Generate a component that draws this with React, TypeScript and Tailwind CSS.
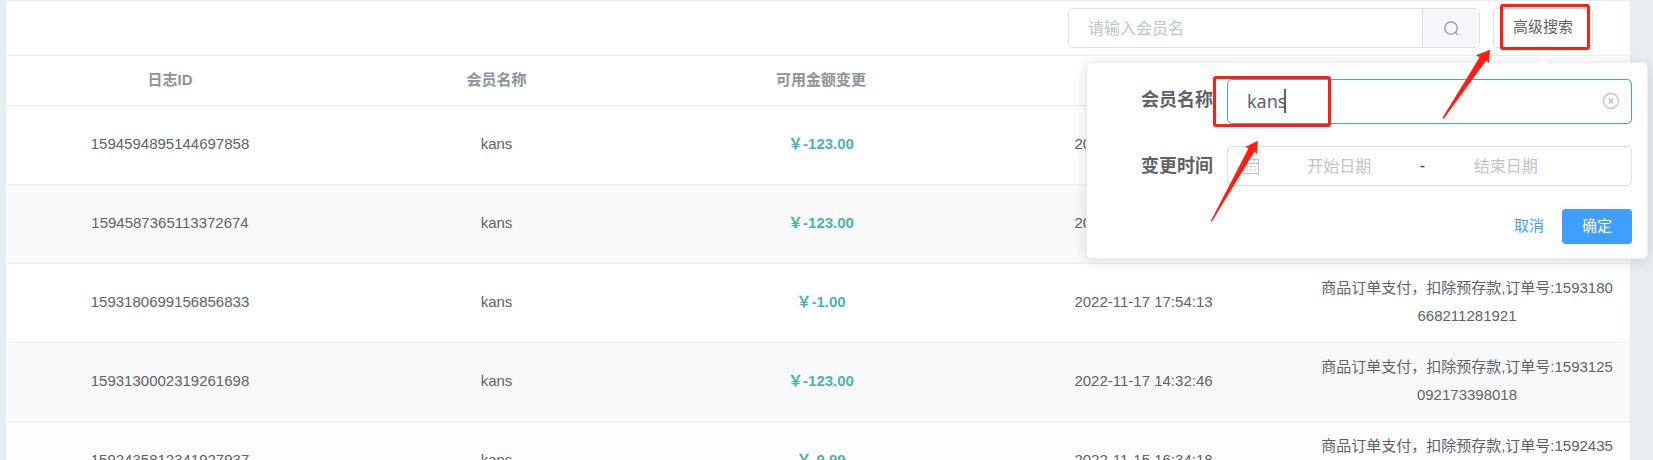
import { useState } from 'react';

interface ILog {
    id: string;
    name: string;
    amount: string;
    time: string;
    detail: string;
}

const logs: ILog[] = [
    { id: '1594594895144697858', name: 'kans', amount: '-123.00', time: '2022-11-21 15:32:10', detail: '商品订单支付，扣除预存款,订单号:1594594869853040641' },
    { id: '1594587365113372674', name: 'kans', amount: '-123.00', time: '2022-11-21 15:02:15', detail: '商品订单支付，扣除预存款,订单号:1594587340576694273' },
    { id: '1593180699156856833', name: 'kans', amount: '-1.00', time: '2022-11-17 17:54:13', detail: '商品订单支付，扣除预存款,订单号:1593180668211281921' },
    { id: '1593130002319261698', name: 'kans', amount: '-123.00', time: '2022-11-17 14:32:46', detail: '商品订单支付，扣除预存款,订单号:1593125092173398018' },
    { id: '1592435812341927937', name: 'kans', amount: '-9.99', time: '2022-11-15 16:34:18', detail: '商品订单支付，扣除预存款,订单号:1592435783409618945' },
]

const rowColors = ['bg-white', 'bg-[#fafafa]', 'bg-white', 'bg-[#fafafa]', 'bg-[#fdfdfd]']

function SearchIcon() {
    return (
        <svg viewBox="0 0 15 15" className="size-[15px]" fill="none" stroke="currentColor" strokeWidth="1.2">
            <circle cx="7" cy="7" r="6.2" />
            <path d="M11.2 11.2 L13.8 13.8" />
        </svg>
    )
}

function ClearIcon() {
    return (
        <svg viewBox="0 0 18 18" className="size-[18px]" fill="none" stroke="currentColor" strokeWidth="1.3">
            <circle cx="9" cy="9" r="7.5" />
            <path d="M6.7 6.7 L11.3 11.3 M11.3 6.7 L6.7 11.3" strokeWidth="1.7" />
        </svg>
    )
}

function CalendarIcon() {
    return (
        <svg viewBox="0 0 18 18" className="size-[18px] shrink-0" fill="none" stroke="currentColor" strokeWidth="1.2">
            <path d="M1.5 2.5 H16.5 V16.5 H1.5 Z M1.5 6.5 H16.5 M5.5 0.8 V4.5 M12.5 0.8 V4.5" />
            <path d="M4 9.5 H6 M8 9.5 H10 M12 9.5 H14 M4 13 H6 M8 13 H10 M12 13 H14" />
        </svg>
    )
}

function AdvancedSearch() {
    const [name, setName] = useState('kans')
    return (
        <form className="absolute top-[54px] -right-[55px] z-10 w-[562px] rounded-[5px] border border-[#ebeef5] bg-white pt-4 pr-[15px] pb-[14px] shadow-[0_2px_15px_rgba(0,0,0,0.12)]">
            <svg viewBox="0 0 14 7" className="absolute -top-[6px] right-[98px] w-[14px] h-[7px]">
                <path d="M0 7 L7 0 L14 7 Z" fill="#fff" />
            </svg>
            <div className="flex">
                <label htmlFor="member-name" className="w-[140px] shrink-0 pr-[14px] pt-[7px] text-right text-[18px] leading-7 font-bold">会员名称</label>
                <div className="relative flex-1">
                    <input
                        id="member-name"
                        value={name}
                        onChange={e => setName(e.target.value)}
                        className="block w-full h-[45px] rounded-[5px] border border-[#409eff] bg-white px-[19px] pb-[2px] text-[18px] font-['Noto_Sans','Noto_Sans_CJK_SC',sans-serif] outline-none"
                    />
                    <span className="absolute left-[57px] top-[10px] w-[2px] h-6 bg-[#606266]"></span>
                    <button type="button" aria-label="清空" onClick={() => setName('')} className="absolute right-3 top-[13px] text-[#c0c4cc]">
                        <ClearIcon />
                    </button>
                    <span className="absolute -left-[14px] -top-[3px] w-[118px] h-[51px] rounded-[3px] border-3 border-[#ff1e10]"></span>
                    <svg viewBox="0 0 50 84" className="absolute -left-[17px] top-[61px] z-10 w-[50px] h-[84px]">
                        <path d="M47.8 0.8 L47 14.2 L44.6 11.6 L1.8 81.8 L0.8 81 L38.4 8.6 L35.3 7 Z" fill="#ff1e10" />
                    </svg>
                </div>
            </div>
            <div className="mt-[22px] flex">
                <label htmlFor="start-date" className="w-[140px] shrink-0 pr-[14px] pt-[6px] text-right text-[18px] leading-7 font-bold">变更时间</label>
                <div className="flex h-10 min-w-0 flex-1 items-center rounded-[5px] border border-[#dcdfe6] pl-[14px] pr-[46px] text-base">
                    <span className="text-[#c0c4cc]"><CalendarIcon /></span>
                    <input id="start-date" placeholder="开始日期" className="min-w-0 flex-1 pt-[2px] text-center placeholder:text-[#c0c4cc] outline-none" />
                    <span className="w-2 text-center text-[#303133]">-</span>
                    <input aria-label="结束日期" placeholder="结束日期" className="min-w-0 flex-1 pt-[2px] text-center placeholder:text-[#c0c4cc] outline-none" />
                </div>
            </div>
            <div className="mt-[23px] flex items-center justify-end gap-[18px] text-[15px]">
                <button type="button" className="text-[#409eff]">取消</button>
                <button type="submit" className="h-[35px] w-[70px] rounded-[4px] bg-[#409eff] text-white">确定</button>
            </div>
        </form>
    )
}

function App() {
    return (
        <div className="h-screen overflow-hidden bg-[#e8edf1] pt-px pl-[6px] pr-[23px] text-[15px] text-[#606266] font-['Liberation_Sans','Noto_Sans_CJK_SC',sans-serif]">
            <div className="bg-white">
                <div className="flex justify-end gap-[13px] pt-[7px] pb-[7px] pr-[37px]">
                    <div className="flex h-10 w-[412px] overflow-hidden rounded-[5px] border border-[#dcdfe6]">
                        <input aria-label="会员名" placeholder="请输入会员名" className="min-w-0 flex-1 px-[19px] pt-[2px] text-base placeholder:text-[#c0c4cc] outline-none" />
                        <button aria-label="搜索" className="flex w-[57px] items-center justify-center border-l border-[#dcdfe6] bg-[#f5f7fa] text-[#909399]">
                            <SearchIcon />
                        </button>
                    </div>
                    <div className="relative">
                        <button className="h-10 w-[100px] rounded-[5px] border border-[#dcdfe6] bg-white pb-[2px]">高级搜索</button>
                        <AdvancedSearch />
                        <span className="absolute left-[7px] -top-1 w-[90px] h-[46px] rounded-[3px] border-3 border-[#ff1e10]"></span>
                        <svg viewBox="0 0 50 72" className="absolute -left-[52px] top-[41px] z-20 w-[50px] h-[72px]">
                            <path d="M49 0.8 L47.9 14 L45.2 11.6 L2.6 70 L1.4 69 L38.6 8.3 L35 6.2 Z" fill="#ff1e10" />
                        </svg>
                    </div>
                </div>
                <table className="w-full table-fixed border-collapse text-center leading-7">
                    <colgroup>
                        <col className="w-[328px]" />
                        <col className="w-[325px]" />
                        <col className="w-[324px]" />
                        <col className="w-[321px]" />
                        <col className="w-[326px]" />
                    </colgroup>
                    <thead className="text-[#909399]">
                        <tr className="h-[50px] border-y border-[#ebeef5]">
                            <th className="pb-[2px]">日志ID</th>
                            <th className="pb-[2px]">会员名称</th>
                            <th className="pb-[2px]">可用金额变更</th>
                            <th className="pb-[2px]">变更时间</th>
                            <th className="pb-[2px]">业务描述</th>
                        </tr>
                    </thead>
                    <tbody>
                        {
                            logs.map((item, index) => <tr key={item.id} className={`h-[79px] border-b border-[#ebeef5] ${rowColors[index]}`}>
                                <td className="pb-[2px]">{item.id}</td>
                                <td className="pb-[2px]">{item.name}</td>
                                <td className="pb-[2px] font-bold text-[#4ab5ab]">￥{item.amount}</td>
                                <td className="pb-[2px]">{item.time}</td>
                                <td className="px-[14px] pb-[2px] break-all">{item.detail}</td>
                            </tr>)
                        }
                    </tbody>
                </table>
            </div>
        </div>
    )
}

export default App
